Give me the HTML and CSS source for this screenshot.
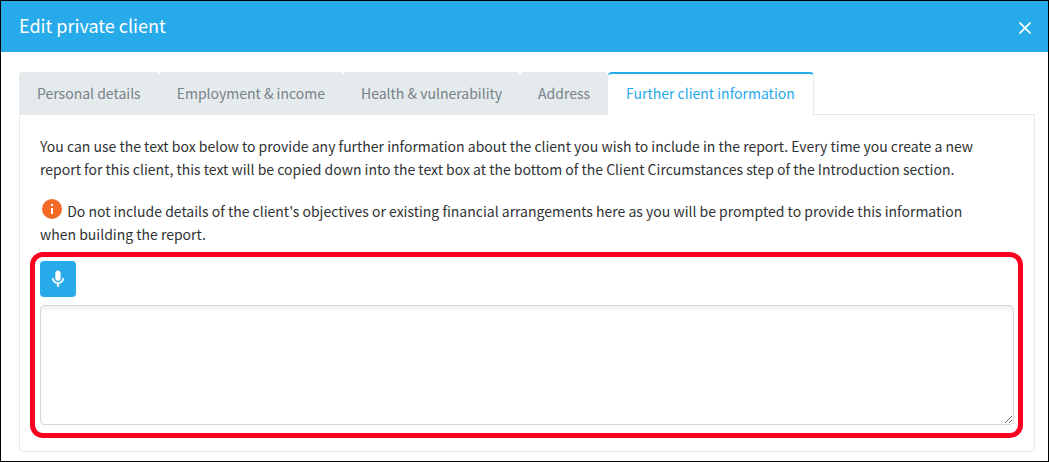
FILE: index.html
```html
<!DOCTYPE html>
<html lang="en">
<head>
<meta charset="utf-8">
<title>Edit private client</title>
<link rel="stylesheet" href="styles.css">
</head>
<body>
<main class="dialog" role="dialog" aria-labelledby="dialog-title">
  <header class="dialog-header">
    <h1 class="dialog-title" id="dialog-title">Edit private client</h1>
    <button class="close" type="button" aria-label="Close">
      <svg width="12" height="12" viewBox="0 0 12 12" aria-hidden="true"><path d="M.5.5l11 11M11.500.5L.5 11.500" fill="none" stroke="currentColor" stroke-width="1.7"/></svg>
    </button>
  </header>
  <div class="dialog-body">
    <nav class="tabs" role="tablist">
      <button class="tab" type="button" role="tab">Personal details</button>
      <button class="tab" type="button" role="tab">Employment &amp; income</button>
      <button class="tab" type="button" role="tab">Health &amp; vulnerability</button>
      <button class="tab" type="button" role="tab">Address</button>
      <button class="tab tab-active" type="button" role="tab" aria-selected="true">Further client information</button>
    </nav>
    <section class="panel" role="tabpanel">
      <p class="text" id="help">You can use the text box below to provide any further information about the client you wish to include in the report. Every time you create a new report for this client, this text will be copied down into the text box at the bottom of the Client Circumstances step of the Introduction section.</p>
      <p class="text"><svg class="info" width="24" height="24" viewBox="0 0 24 24" aria-hidden="true"><path fill="currentColor" d="M12 2a10 10 0 100 20 10 10 0 000-20zm1 15h-2v-6h2zm0-8h-2V7h2z"/></svg> Do not include details of the client's objectives or existing financial arrangements here as you will be prompted to provide this information when building the report.</p>
      <div class="highlight">
        <button class="dictate" type="button" aria-label="Dictate">
          <svg width="20" height="20" viewBox="0 0 24 24" aria-hidden="true"><path fill="currentColor" stroke="currentColor" stroke-width=".5" d="M12 14c1.660 0 3-1.340 3-3V5c0-1.660-1.340-3-3-3S9 3.340 9 5v6c0 1.660 1.340 3 3 3zm5.300-3c0 3-2.540 5.100-5.300 5.100S6.700 14 6.700 11H5c0 3.410 2.720 6.230 6 6.720V21h2v-3.280c3.280-.48 6-3.300 6-6.720z"/></svg>
        </button>
        <textarea class="notes" aria-label="Further client information" aria-describedby="help"></textarea>
      </div>
    </section>
  </div>
</main>
</body>
</html>
```
FILE: styles.css
```css
* {
  box-sizing: border-box;
}

body {
  margin: 0;
  background: #fff;
  color: #303335;
  font-family: "Noto Sans CJK SC", "Noto Sans", sans-serif;
  font-size: 14px;
  line-height: 23px;
}

button {
  margin: 0;
  border: 0;
  font: inherit;
  cursor: pointer;
}

.dialog {
  min-height: 100vh;
  border: 1px solid #000;
}

.dialog-header {
  display: flex;
  align-items: center;
  justify-content: space-between;
  padding: 12px 17px 15px 18px;
  background: #27aaea;
  color: #fff;
}

.dialog-title {
  margin: 0;
  font-size: 18px;
  font-weight: 400;
  line-height: 24px;
}

.close {
  display: flex;
  padding: 6px 0 0;
  background: none;
  color: inherit;
}

.dialog-body {
  padding: 20px 13px 9px 18px;
}

.tabs {
  display: flex;
}

.tab {
  padding: 8px 18px 10px;
  border-top: 2px solid #e5eaec;
  border-radius: 4px 4px 0 0;
  background: #e5eaec;
  color: #76838a;
  white-space: nowrap;
}

.tab-active {
  z-index: 1;
  margin-bottom: -1px;
  padding-bottom: 11px;
  border-top-color: #27aaea;
  border-right: 1px solid #e5eaec;
  background: #fff;
  color: #27aaea;
}

.panel {
  margin-top: -1px;
  padding: 20px 20px 13px;
  border: 1px solid #e5eaec;
  border-radius: 0 0 4px 4px;
}

.text {
  margin: 0 0 19px;
  padding-right: 24px;
}

.info {
  margin: -10px 0 -2px;
  color: #f26a26;
  vertical-align: middle;
}

.highlight {
  margin: -13px -9px 0 -10px;
  padding: 4px 4px 8px 5px;
  border: 5px solid #fb0021;
  border-radius: 13px;
}

.dictate {
  display: flex;
  align-items: center;
  justify-content: center;
  width: 36px;
  height: 36px;
  margin-bottom: 8px;
  padding: 0;
  border-radius: 4px;
  background: #27aaea;
  color: #fff;
}

.notes {
  display: block;
  width: 100%;
  height: 120px;
  padding: 8px;
  border: 1px solid #d3d9db;
  border-radius: 4px;
  box-shadow: inset 0 3px 5px #00000010;
  color: inherit;
  font: inherit;
  resize: vertical;
}
```
